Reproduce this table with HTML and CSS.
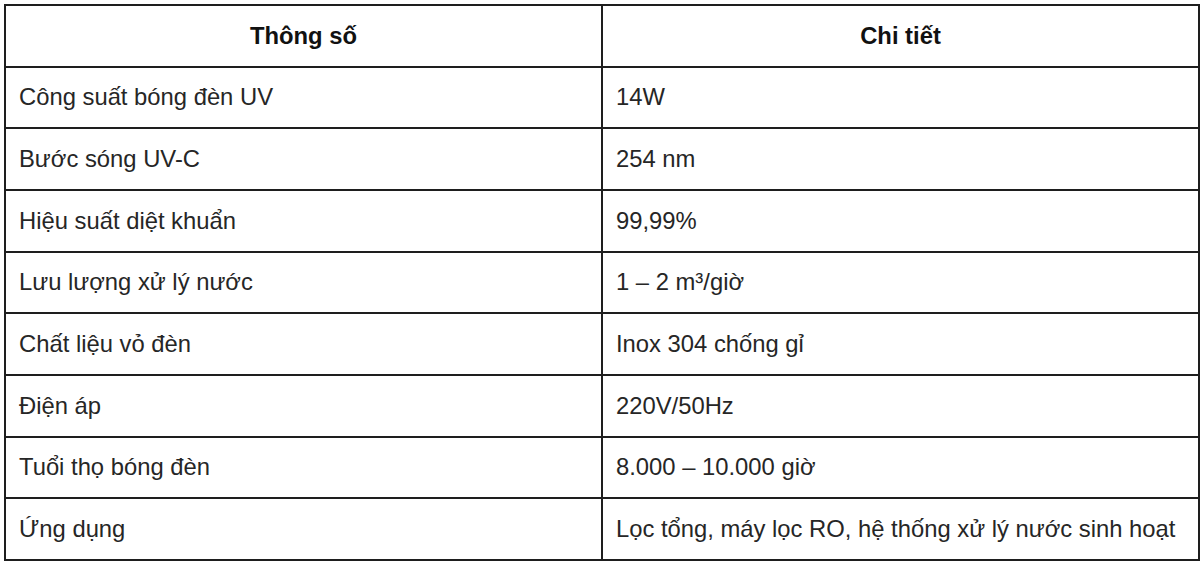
FILE: index.html
```html
<!DOCTYPE html>
<html lang="vi">
<head>
<meta charset="utf-8">
<title>Thông số</title>
<link rel="stylesheet" href="styles.css">
</head>
<body>
<table class="spec">
  <thead>
    <tr><th>Thông số</th><th>Chi tiết</th></tr>
  </thead>
  <tbody>
    <tr><td>Công suất bóng đèn UV</td><td>14W</td></tr>
    <tr><td>Bước sóng UV-C</td><td>254 nm</td></tr>
    <tr><td>Hiệu suất diệt khuẩn</td><td>99,99%</td></tr>
    <tr><td>Lưu lượng xử lý nước</td><td>1 – 2 m³/giờ</td></tr>
    <tr><td>Chất liệu vỏ đèn</td><td>Inox 304 chống gỉ</td></tr>
    <tr><td>Điện áp</td><td>220V/50Hz</td></tr>
    <tr><td>Tuổi thọ bóng đèn</td><td>8.000 – 10.000 giờ</td></tr>
    <tr><td>Ứng dụng</td><td>Lọc tổng, máy lọc RO, hệ thống xử lý nước sinh hoạt</td></tr>
  </tbody>
</table>
</body>
</html>
```
FILE: styles.css
```css
html, body {
  margin: 0;
  padding: 0;
  background: #ffffff;
}
body {
  padding: 4px;
  font-family: "Liberation Sans", Arial, sans-serif;
  color: #262626;
}
.spec {
  width: 1196px;
  border-collapse: collapse;
  table-layout: fixed;
  font-size: 23.8px;
}
.spec tr {
  height: 61.67px;
}
.spec th,
.spec td {
  width: 50%;
  border: 2px solid #1e1e1e;
  padding: 0 13px;
  vertical-align: middle;
  line-height: 28px;
}
.spec th {
  font-weight: bold;
  text-align: center;
  color: #111111;
}
.spec td {
  text-align: left;
}
```
